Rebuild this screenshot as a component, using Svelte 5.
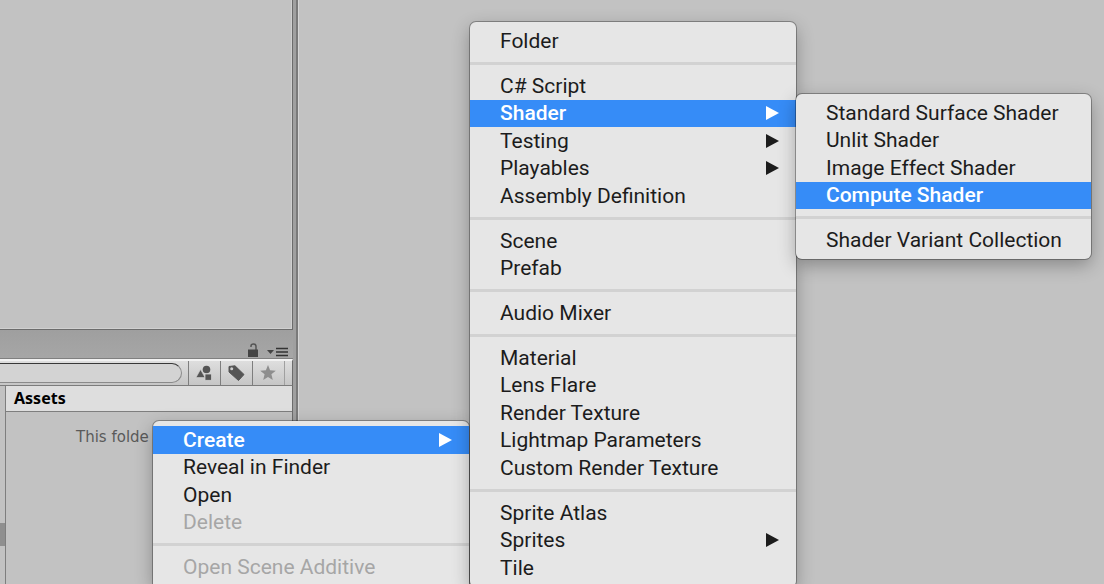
<script lang="ts">
	type Item = { label: string; sub?: boolean; active?: boolean; disabled?: boolean };
	type Menu = { id: string; label: string; groups: Item[][] };

	// each inner array is one block between separators
	const menus: Menu[] = [
		{
			id: 'assets',
			label: 'Assets',
			groups: [
				[
					{ label: 'Create', sub: true, active: true },
					{ label: 'Reveal in Finder' },
					{ label: 'Open' },
					{ label: 'Delete', disabled: true },
				],
				[{ label: 'Open Scene Additive', disabled: true }],
			],
		},
		{
			id: 'create',
			label: 'Create',
			groups: [
				[{ label: 'Folder' }],
				[
					{ label: 'C# Script' },
					{ label: 'Shader', sub: true, active: true },
					{ label: 'Testing', sub: true },
					{ label: 'Playables', sub: true },
					{ label: 'Assembly Definition' },
				],
				[{ label: 'Scene' }, { label: 'Prefab' }],
				[{ label: 'Audio Mixer' }],
				[
					{ label: 'Material' },
					{ label: 'Lens Flare' },
					{ label: 'Render Texture' },
					{ label: 'Lightmap Parameters' },
					{ label: 'Custom Render Texture' },
				],
				[{ label: 'Sprite Atlas' }, { label: 'Sprites', sub: true }, { label: 'Tile' }],
			],
		},
		{
			id: 'shader',
			label: 'Shader',
			groups: [
				[
					{ label: 'Standard Surface Shader' },
					{ label: 'Unlit Shader' },
					{ label: 'Image Effect Shader' },
					{ label: 'Compute Shader', active: true },
				],
				[{ label: 'Shader Variant Collection' }],
			],
		},
	];

	let search = $state('');
</script>

<div class="editor">
	<aside class="dock">
		<div class="upper-pane"></div>

		<section class="project">
			<div class="tab-strip">
				<button class="plain" aria-label="Lock">
					<svg width="12" height="15" viewBox="0 0 12 15">
						<path d="M4 4V3Q4 1 6.500 1Q9 1 9 3.500V7" fill="none" stroke="#555" stroke-width="1.500" />
						<rect x="1" y="6.500" width="10" height="7.500" fill="#444" />
					</svg>
				</button>
				<button class="plain" aria-label="Pane options">
					<svg width="21" height="11" viewBox="0 0 21 11">
						<path d="M0 3H7L3.500 7Z" fill="#444" />
						<path d="M9 1.500H21M9 5H21M9 8.500H21" stroke="#333" stroke-width="1.400" />
					</svg>
				</button>
			</div>

			<div class="toolbar">
				<input type="text" aria-label="Search" bind:value={search} />
				<button class="tool" aria-label="Search by type">
					<svg width="18" height="18" viewBox="0 0 18 18" fill="#555">
						<circle cx="11.500" cy="5.500" r="3.800" />
						<path d="M5.500 5.500L1 13.500H10Z" stroke="#d2d2d2" stroke-width="0.600" />
						<rect x="10" y="10" width="6.600" height="6.300" stroke="#d2d2d2" stroke-width="0.800" />
					</svg>
				</button>
				<button class="tool" aria-label="Search by label">
					<svg width="18" height="18" viewBox="0 0 18 18">
						<path d="M2 2.500L8 1.800L17 10.500L11.500 16.500L2 8Z" fill="#555" stroke="#555" stroke-linejoin="round" />
						<circle cx="4.700" cy="4.800" r="1.500" fill="#d0d0d0" />
					</svg>
				</button>
				<button class="tool" aria-label="Favorites">
					<svg width="18" height="18" viewBox="0 0 18 18">
						<path d="M9 1L11.100 6.300L16.800 6.700L12.400 10.300L13.800 16L9 12.900L4.200 16L5.600 10.300L1.200 6.700L6.900 6.300Z" fill="#8e8e8e" />
					</svg>
				</button>
				<span class="tool-end"></span>
			</div>

			<div class="browser">
				<div class="tree"><div class="thumb"></div></div>
				<div class="files">
					<h2>Assets</h2>
					<p>This folde</p>
				</div>
			</div>
		</section>
	</aside>

	<main></main>

	{#each menus as menu (menu.id)}
		<div class="menu {menu.id}" role="menu" aria-label={menu.label}>
			{#each menu.groups as group}
				<div class="group" role="group">
					{#each group as item}
						<button
							class="item"
							class:active={item.active}
							role="menuitem"
							aria-haspopup={item.sub ? 'menu' : undefined}
							disabled={item.disabled}
						>
							<span>{item.label}</span>
							{#if item.sub}
								<svg width="13" height="14" viewBox="0 0 13 14"><path d="M0 0L13 7L0 14Z" fill="currentColor" /></svg>
							{/if}
						</button>
					{/each}
				</div>
			{/each}
		</div>
	{/each}
</div>

<style>
	:global(body) {
		margin: 0;
		background: #c2c2c2;
	}

	.editor {
		position: relative;
		display: grid;
		grid-template-columns: 298px 1fr;
		height: 100vh;
		overflow: hidden;
		background: #a0a0a0;
		font-family: Roboto, "Liberation Sans", sans-serif;
	}

	button {
		font: inherit;
		margin: 0;
		padding: 0;
		border: 0;
		background: none;
	}

	svg {
		display: block;
		flex: none;
	}

	main {
		background: #c2c2c2;
		border-left: 1px solid #d6d6d6;
	}

	/* Left dock */
	.dock {
		display: flex;
		flex-direction: column;
		padding-right: 3px;
		border-right: 2px solid #7a7a7a;
	}

	.upper-pane {
		flex: 1;
		background: #c2c2c2;
		border-right: 1px solid #6c6c6c;
		border-bottom: 1px solid #6c6c6c;
		box-shadow: inset -1px -1px #d0d0d0;
	}

	.project {
		display: flex;
		flex-direction: column;
		height: 254px;
	}

	.tab-strip {
		display: flex;
		align-items: flex-end;
		justify-content: flex-end;
		gap: 8px;
		box-sizing: border-box;
		height: 29px;
		padding-right: 5px;
		background: linear-gradient(#9f9f9f, #a6a6a6);
		border-bottom: 1px solid #808080;
	}

	.toolbar {
		display: flex;
		align-items: stretch;
		box-sizing: border-box;
		height: 27px;
		background: linear-gradient(#dedede, #c6c6c6);
		border-top: 2px solid #f2f2f2;
		border-right: 1px solid #6c6c6c;
		border-bottom: 1px solid #7c7c7c;
	}

	.toolbar input {
		flex: 1;
		min-width: 0;
		box-sizing: border-box;
		margin: 2px 6px 2px 0;
		padding: 0 12px 0 8px;
		border: 1px solid #8a8a8a;
		border-top: 1px solid #383838;
		border-left: 0;
		border-radius: 0 10px 10px 0;
		outline: 0;
		background: #d3d3d3;
		font: inherit;
	}

	.tool {
		display: grid;
		place-items: center;
		box-sizing: border-box;
		width: 32px;
		padding-right: 2px;
		border-left: 1px solid #7e7e7e;
	}

	.tool-end {
		width: 7px;
		border-left: 1px solid #a0a0a0;
	}

	.browser {
		flex: 1;
		display: flex;
		border-right: 1px solid #6c6c6c;
		background: #c2c2c2;
	}

	.tree {
		box-sizing: border-box;
		width: 6px;
		padding-top: 137px;
		border-right: 1px solid #7e7e7e;
	}

	.thumb {
		height: 23px;
		background: #8f8f8f;
	}

	.files {
		flex: 1;
	}

	.files h2 {
		margin: 0;
		padding-left: 8px;
		background: #dedede;
		border-bottom: 1px solid #7e7e7e;
		color: #000;
		font-family: "Noto Sans", "Open Sans", sans-serif;
		font-size: 16px;
		font-weight: 700;
		line-height: 25px;
	}

	.files p {
		margin: 13px 0 0;
		padding-left: 70px;
		color: #5a5a5a;
		font-family: "DejaVu Sans", sans-serif;
		font-size: 15px;
		line-height: 24px;
		white-space: nowrap;
	}

	/* Context menus */
	.menu {
		position: absolute;
		box-sizing: border-box;
		padding: 5px 0;
		border-radius: 6px;
		background: #e6e6e6;
		box-shadow:
			0 0 0 1px rgba(0, 0, 0, 0.3),
			0 6px 18px rgba(0, 0, 0, 0.3);
		color: #1c1c1c;
		font-size: 21px;
	}

	.assets {
		top: 421px;
		bottom: 0;
		left: 153px;
		width: 316px;
		border-radius: 6px 6px 0 0;
	}

	.create {
		top: 22px;
		left: 470px;
		width: 326px;
	}

	.shader {
		top: 94px;
		left: 796px;
		width: 295px;
	}

	.group {
		display: grid;
		grid-auto-rows: 28px 27px;
	}

	.group + .group {
		margin-top: 7px;
		padding-top: 7px;
		border-top: 3px solid #d2d2d2;
	}

	.item {
		display: flex;
		align-items: center;
		justify-content: space-between;
		padding: 0 17px 1px 30px;
		color: inherit;
		text-align: left;
		white-space: nowrap;
	}

	.item.active {
		background: #368cf7;
		color: #fff;
		font-weight: 500;
	}

	.item:disabled {
		color: #a6a6a6;
	}
</style>
